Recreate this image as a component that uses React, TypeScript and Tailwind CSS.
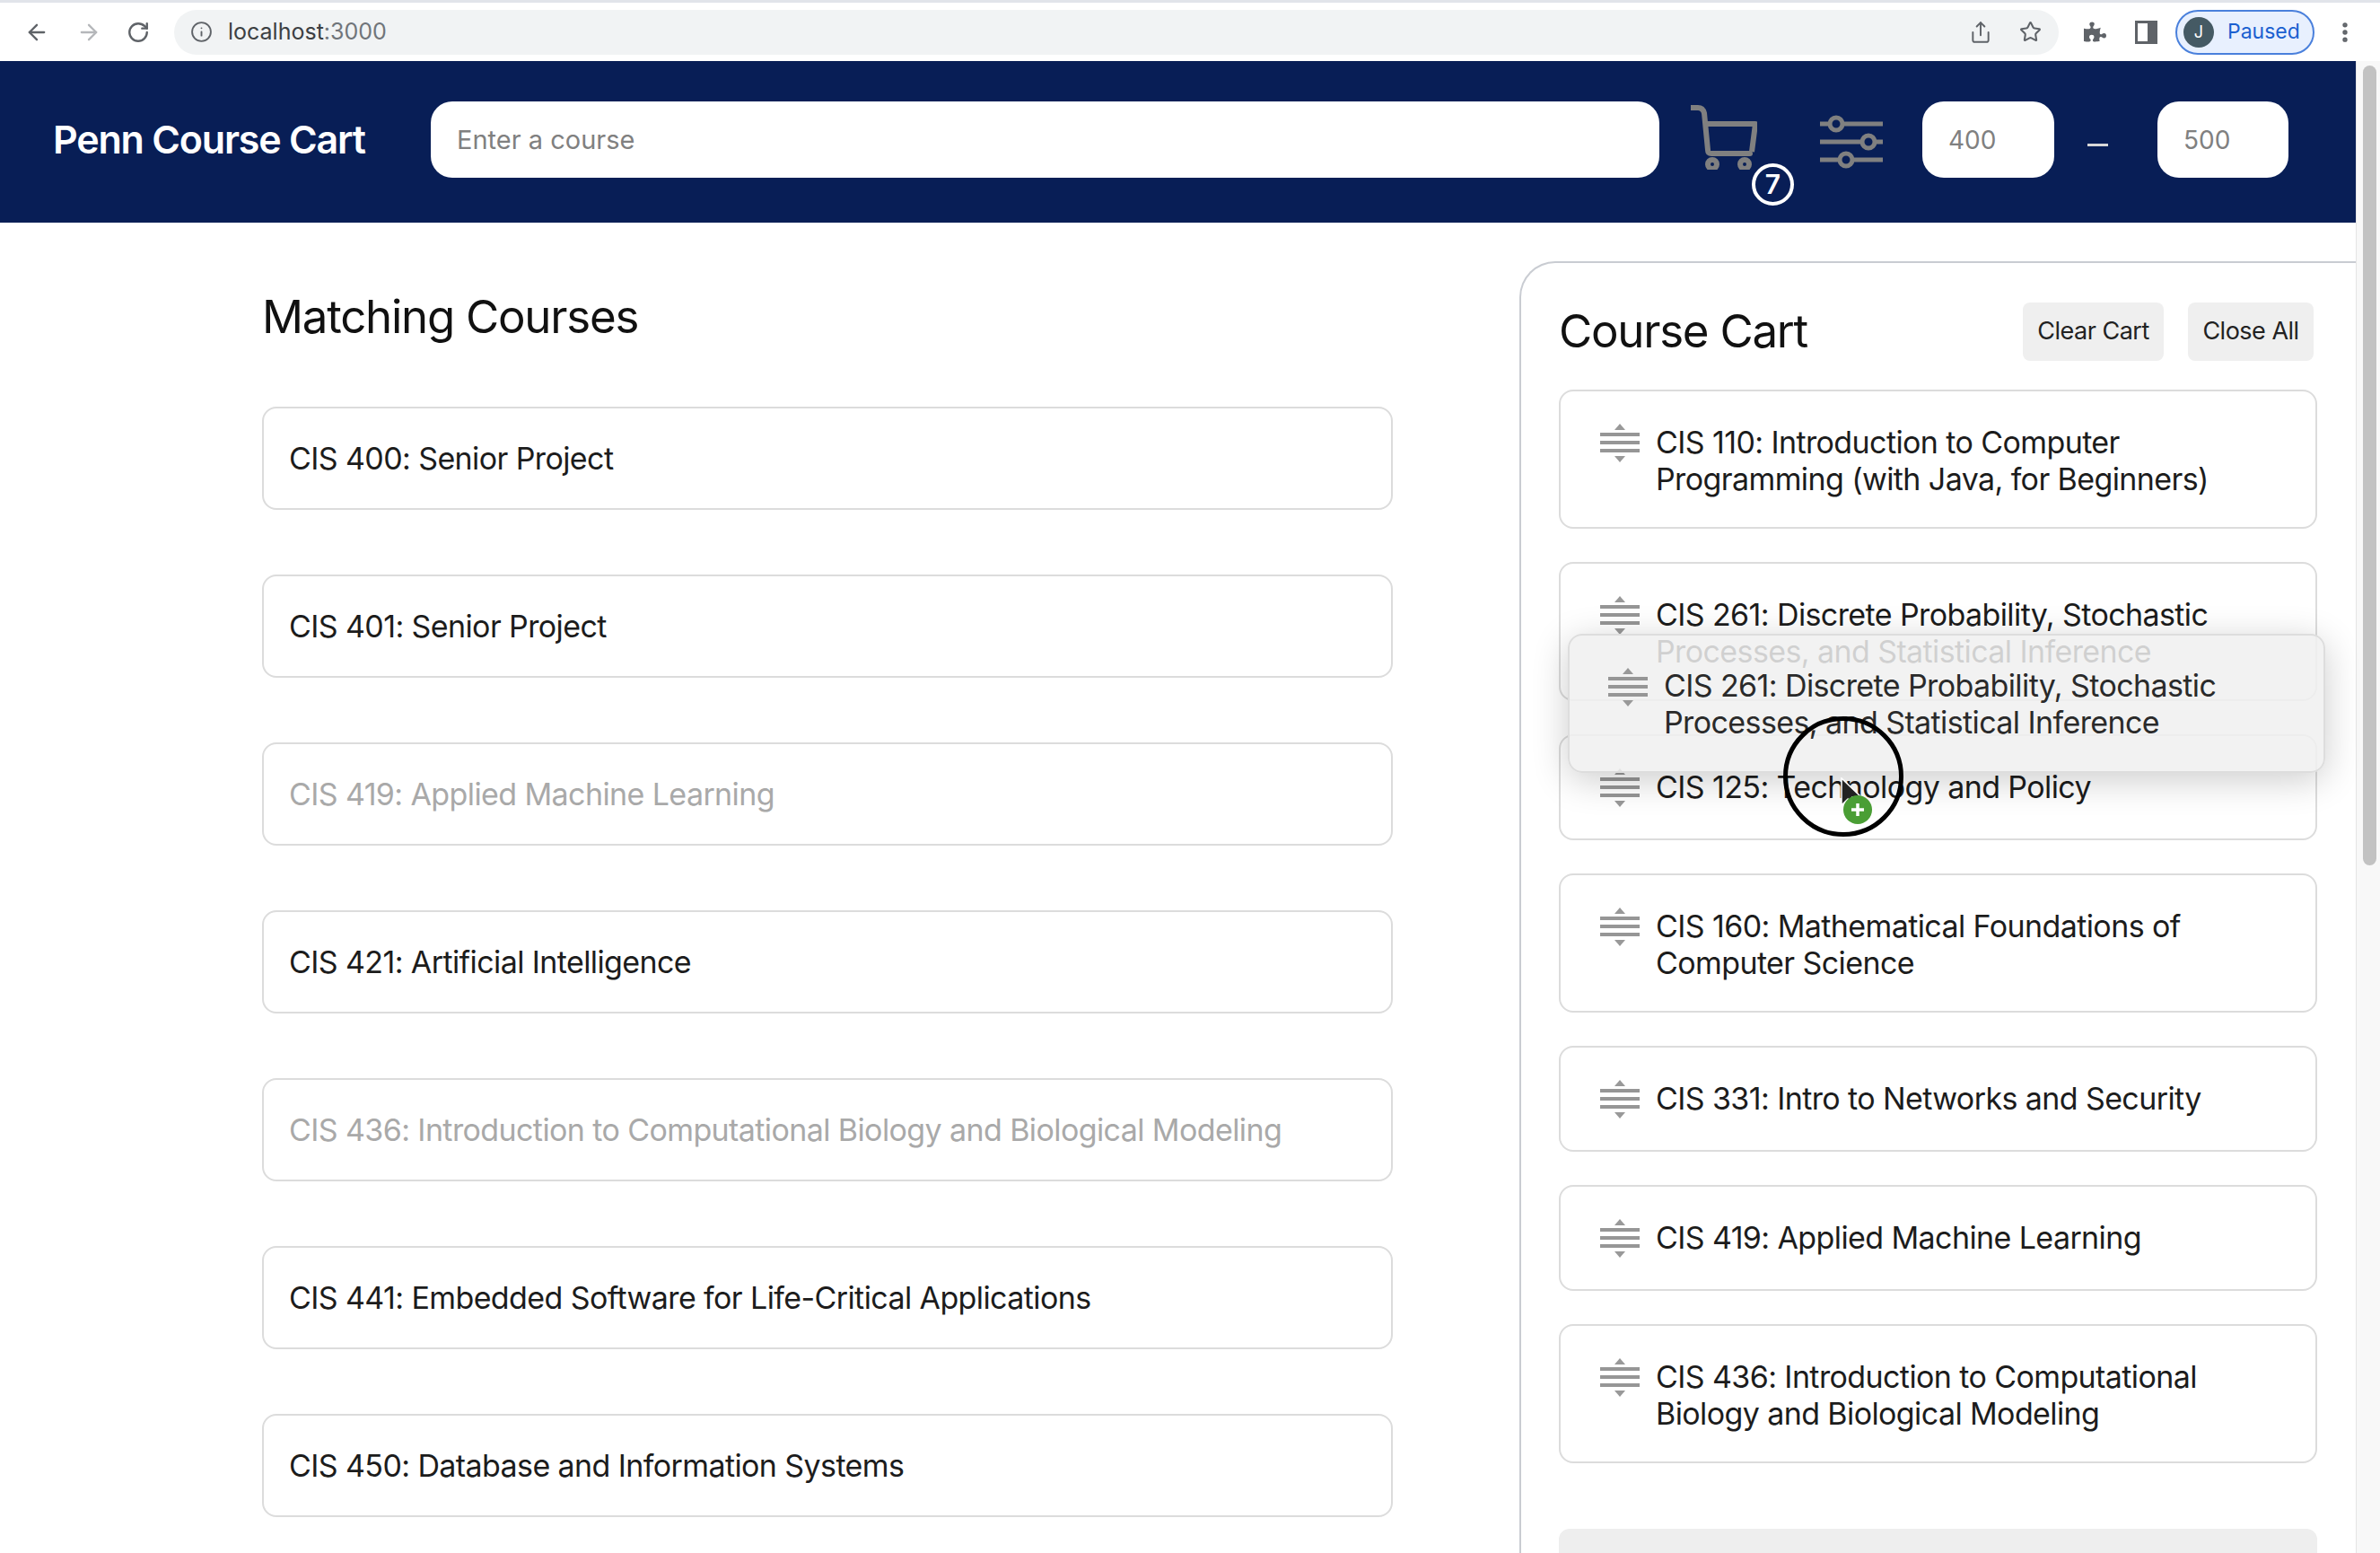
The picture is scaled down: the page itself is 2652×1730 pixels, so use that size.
import { ArrowLeft, ArrowRight, RotateCw, Info, Share, Star, EllipsisVertical } from 'lucide-react'
import { FaPuzzlePiece } from 'react-icons/fa'

const matchingCourses = [
  { name: 'CIS 400: Senior Project' },
  { name: 'CIS 401: Senior Project' },
  { name: 'CIS 419: Applied Machine Learning', inCart: true },
  { name: 'CIS 421: Artificial Intelligence' },
  { name: 'CIS 436: Introduction to Computational Biology and Biological Modeling', inCart: true },
  { name: 'CIS 441: Embedded Software for Life-Critical Applications' },
  { name: 'CIS 450: Database and Information Systems' },
]

const cartCourses = [
  'CIS 110: Introduction to Computer Programming (with Java, for Beginners)',
  'CIS 261: Discrete Probability, Stochastic Processes, and Statistical Inference',
  'CIS 125: Technology and Policy',
  'CIS 160: Mathematical Foundations of Computer Science',
  'CIS 331: Intro to Networks and Security',
  'CIS 419: Applied Machine Learning',
  'CIS 436: Introduction to Computational Biology and Biological Modeling',
]

function DragHandle() {
  return (
    <svg width="44" height="44" viewBox="0 0 44 44" className="shrink-0">
      <path d="M22 0l6 7H16z" fill="#999" />
      <path d="M0 12h44M0 21h44M0 30h44" stroke="#969696" strokeWidth="4" />
      <path d="M22 43l6-7H16z" fill="#999" />
    </svg>
  )
}

function CartIcon() {
  return (
    <svg width="74" height="72" viewBox="0 0 74 72" fill="none" stroke="#808080" strokeWidth="6">
      <path d="M1 3h7c4 0 6 2 7 6l4 41c0 3 1 4 4 4h43" strokeLinecap="round" />
      <path d="M16 21h56l-4 31" strokeLinejoin="round" />
      <circle cx="24" cy="66" r="5" />
      <circle cx="60" cy="66" r="5" />
    </svg>
  )
}

function SlidersIcon() {
  return (
    <svg width="70" height="60" viewBox="0 0 70 60" fill="none" stroke="#808080" strokeWidth="5">
      <path d="M0 10h11M25 10h45M0 30h47M61 30h9M0 50h22M36 50h34" />
      <circle cx="18" cy="10" r="7" />
      <circle cx="54" cy="30" r="7" />
      <circle cx="29" cy="50" r="7" />
    </svg>
  )
}

function BrowserBar() {
  return (
    <div className="flex h-[68px] shrink-0 items-center border-t-[3px] border-[#e1e4ea] bg-white pl-[27px] text-[#5f6368]">
      <ArrowLeft className="h-[28px] w-[28px]" strokeWidth={2} />
      <ArrowRight className="ml-[30px] h-[28px] w-[28px] text-[#b5b7ba]" strokeWidth={2} />
      <RotateCw className="ml-[28px] h-[26px] w-[26px]" strokeWidth={2.2} />
      <div className="ml-[27px] flex h-[50px] w-[2100px] items-center rounded-full bg-[#f1f3f4] pl-[18px] pr-[19px]">
        <Info className="h-[25px] w-[25px]" strokeWidth={1.8} />
        <span className="ml-[17px] text-[25px] text-[#3c4043]">
          localhost<span className="text-[#70757a]">:3000</span>
        </span>
        <Share className="ml-auto h-[26px] w-[26px]" strokeWidth={1.8} />
        <Star className="ml-[30px] h-[25px] w-[25px]" strokeWidth={2} />
      </div>
      <FaPuzzlePiece className="ml-[28px] h-[25px] w-[25px]" />
      <div className="ml-[32px] h-[26px] w-[25px] border-[3px] border-r-[11px] border-[#5f6368]" />
      <div className="ml-[20px] flex h-[50px] w-[155px] items-center rounded-full border-2 border-[#4a80dc] bg-[#e8f0fe] pl-[7px]">
        <div className="flex h-[34px] w-[34px] items-center justify-center rounded-full bg-[#455a64] text-[18px] text-white">J</div>
        <span className="ml-[15px] text-[23px] text-[#1a60d0]">Paused</span>
      </div>
      <EllipsisVertical className="ml-[20px] h-[28px] w-[28px]" strokeWidth={2.6} />
    </div>
  )
}

function Header() {
  return (
    <div className="flex h-[180px] shrink-0 items-center bg-[#081e56] pb-[5px] pl-[59px]">
      <h1 className="w-[421px] text-[43px] font-semibold tracking-[-1.2px] text-white">Penn Course Cart</h1>
      <input
        placeholder="Enter a course"
        className="h-[85px] w-[1369px] rounded-[24px] bg-white px-[29px] text-[29px] placeholder:text-[#808080]"
      />
      <div className="relative ml-[35px] h-[72px] w-[74px] -translate-y-[3px]">
        <CartIcon />
        <div className="absolute left-[68px] top-[65px] flex h-[47px] w-[47px] items-center justify-center rounded-full border-[4px] border-white bg-[#081e56] text-[30px] font-semibold text-white">
          7
        </div>
      </div>
      <div className="ml-[70px] translate-y-[2px]">
        <SlidersIcon />
      </div>
      <input placeholder="400" className="ml-[44px] h-[85px] w-[147px] rounded-[24px] bg-white px-[29px] text-[28px] placeholder:text-[#808080]" />
      <div className="ml-[37px] h-[3px] w-[23px] translate-y-[6px] bg-[#d8d8d8]" />
      <input placeholder="500" className="ml-[55px] h-[85px] w-[146px] rounded-[24px] bg-white px-[29px] text-[28px] placeholder:text-[#808080]" />
    </div>
  )
}

function CartCard({ name }: { name: string }) {
  return (
    <div className="flex min-h-[118px] items-start gap-[18px] rounded-[16px] border-2 border-[#dcdcdc] bg-white px-[44px] pb-[33px] pt-[36px] text-[#1c1c1c]">
      <div className="h-[41px]">
        <DragHandle />
      </div>
      <span className="text-[34px] leading-[41px] tracking-[-0.6px]">{name}</span>
    </div>
  )
}

export default function App() {
  return (
    <div className="relative flex h-[1730px] w-[2652px] flex-col overflow-hidden bg-white font-['Inter',sans-serif]">
      <BrowserBar />
      <div className="flex min-h-0 flex-1">
        <div className="flex min-w-0 flex-1 flex-col">
          <Header />
          <div className="flex min-h-0 flex-1">
            {/* Matching courses */}
            <div className="w-[1693px] shrink-0 pl-[292px] pr-[141px] pt-[75px]">
              <h2 className="text-[51px] leading-[60px] tracking-[-1.25px] text-[#111]">Matching Courses</h2>
              <div className="mt-[70px] flex flex-col gap-[72px]">
                {matchingCourses.map((course) => (
                  <div
                    key={course.name}
                    className={`flex h-[115px] shrink-0 items-center rounded-[16px] border-2 border-[#dcdcdc] px-[28px] text-[34px] tracking-[-0.6px] ${course.inCart ? 'text-[#a9a9a9]' : 'text-[#1c1c1c]'}`}
                  >
                    {course.name}
                  </div>
                ))}
              </div>
            </div>

            {/* Course cart */}
            <div className="mt-[43px] min-w-0 flex-1 rounded-tl-[40px] border-l-2 border-t-2 border-[#c9ccd2] pl-[42px] pr-[43px] pt-[44px]">
              <div className="flex h-[65px] items-center pr-[4px]">
                <h2 className="text-[51px] tracking-[-1.25px] text-[#111]">Course Cart</h2>
                <button className="ml-auto h-[65px] w-[157px] rounded-[8px] bg-[#efefef] text-[27px] tracking-[-0.5px] text-[#222]">Clear Cart</button>
                <button className="ml-[27px] h-[65px] w-[140px] rounded-[8px] bg-[#efefef] text-[27px] tracking-[-0.5px] text-[#222]">Close All</button>
              </div>
              <div className="mt-[32px] flex flex-col gap-[37px]">
                {cartCourses.map((name) => (
                  <CartCard key={name} name={name} />
                ))}
                <div className="mt-[36px] h-[80px] shrink-0 rounded-t-[12px] bg-[#eeeeee]" />
              </div>
            </div>
          </div>
        </div>

        {/* Scrollbar */}
        <div className="w-[27px] shrink-0 border-l border-[#e4e4e4] bg-[#f8f8f8] pl-[7px] pt-[5px]">
          <div className="h-[891px] w-[15px] rounded-full bg-[#c2c2c2]" />
        </div>
      </div>

      {/* Card being dragged */}
      <div className="absolute left-[1747px] top-[706px] flex h-[155px] w-[844px] items-start gap-[18px] rounded-[16px] border-2 border-[#dddddd] bg-[#f0f0f0]/85 px-[43px] py-[35px] text-[#2a2a2a] shadow-[0_8px_40px_rgba(0,0,0,0.2)]">
        <div className="pt-[1px]">
          <DragHandle />
        </div>
        <span className="text-[34px] leading-[41px] tracking-[-0.6px]">CIS 261: Discrete Probability, Stochastic Processes, and Statistical Inference</span>
      </div>

      {/* Cursor highlight */}
      <div className="absolute left-[1987px] top-[798px] h-[134px] w-[134px] rounded-full border-[5px] border-black" />
      <svg width="26" height="38" viewBox="0 0 26 38" className="absolute left-[2050px] top-[866px]">
        <path d="M2 1v30l7-7 5 12 5-2-5-12h10z" fill="#222" stroke="#fff" strokeWidth="1.5" />
      </svg>
      <div className="absolute left-[2054px] top-[886px] flex h-[32px] w-[32px] items-center justify-center rounded-full bg-[#4a9e35]">
        <svg width="18" height="18" viewBox="0 0 18 18">
          <path d="M9 2v14M2 9h14" stroke="#fff" strokeWidth="3.5" />
        </svg>
      </div>
    </div>
  )
}
